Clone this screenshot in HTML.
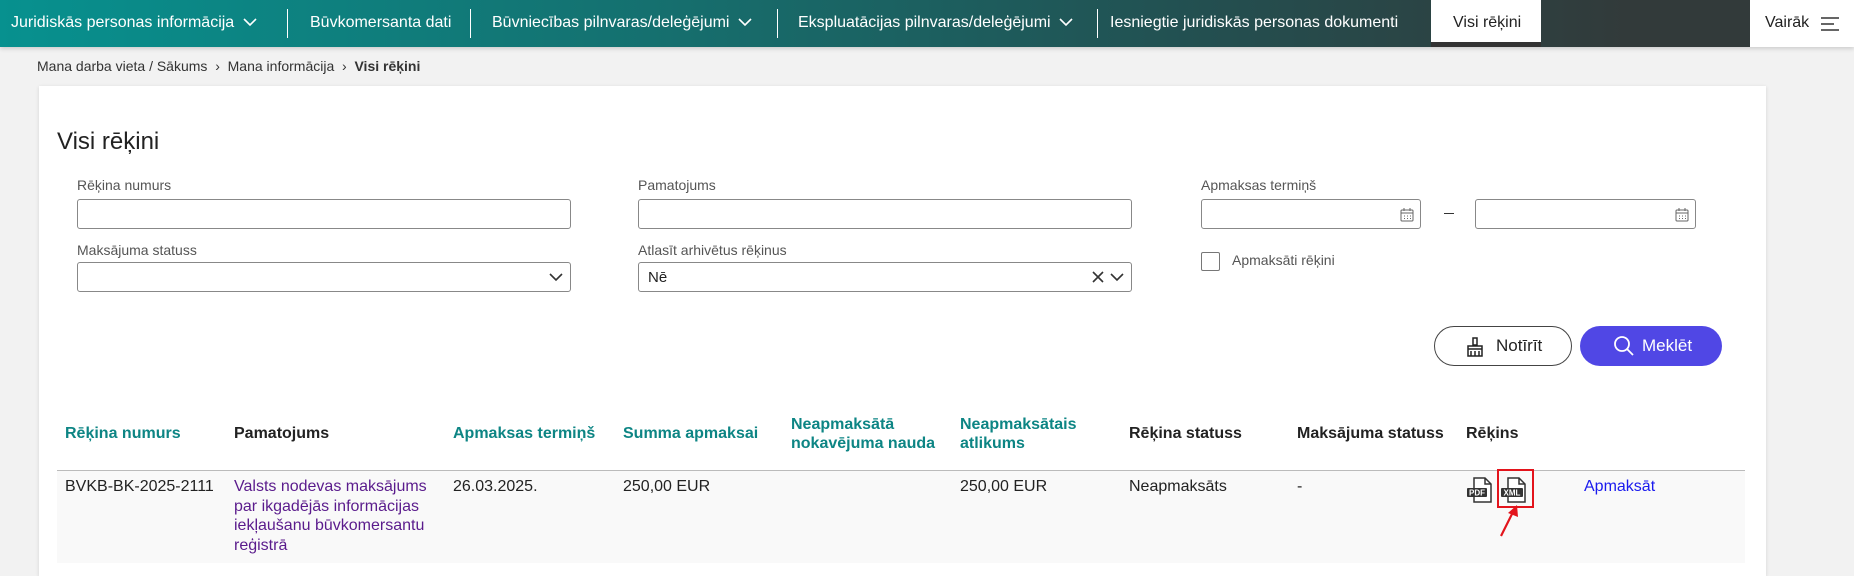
<!DOCTYPE html>
<html><head><meta charset="utf-8"><style>
*{box-sizing:border-box;margin:0;padding:0}
body{width:1854px;height:563px;overflow:hidden;background:#f2f2f2;font-family:"Liberation Sans",Arial,sans-serif;color:#222;position:relative}
.a{position:absolute;white-space:nowrap}
.nav{position:absolute;left:0;top:0;width:1854px;height:47px;background:linear-gradient(90deg,#07918f 0%,#15706f 35%,#234f50 65%,#323a3a 88%);box-shadow:0 2px 4px rgba(0,0,0,.15)}
.nav .t{color:#fff;font-size:16px;top:14px}
.sep{position:absolute;top:9px;width:1px;height:29px;background:#fff}
.card{position:absolute;left:39px;top:86px;width:1727px;height:490px;background:#fff;box-shadow:0 1px 4px rgba(0,0,0,.12)}
.lbl{font-size:14px;color:#555}
.inp{position:absolute;height:30px;border:1px solid #888;border-radius:3px;background:#fff}
.th{font-size:16px;font-weight:bold;line-height:19px;top:424px}
.tl{color:#0d8584}
.td{font-size:16px;line-height:19.5px;top:477px}
</style></head><body>
<div class="nav">
<span class="a t" style="left:11px">Juridiskās personas informācija <svg width="14" height="10" viewBox="0 0 14 10" style="margin-left:4px"><path d="M1 2l6 6 6-6" stroke="#fff" stroke-width="1.6" fill="none"/></svg></span>
<div class="sep" style="left:287px"></div>
<span class="a t" style="left:310px">Būvkomersanta dati</span>
<div class="sep" style="left:470px"></div>
<span class="a t" style="left:492px">Būvniecības pilnvaras/deleģējumi <svg width="14" height="10" viewBox="0 0 14 10" style="margin-left:4px"><path d="M1 2l6 6 6-6" stroke="#fff" stroke-width="1.6" fill="none"/></svg></span>
<div class="sep" style="left:777px"></div>
<span class="a t" style="left:798px">Ekspluatācijas pilnvaras/deleģējumi <svg width="14" height="10" viewBox="0 0 14 10" style="margin-left:4px"><path d="M1 2l6 6 6-6" stroke="#fff" stroke-width="1.6" fill="none"/></svg></span>
<div class="sep" style="left:1097px"></div>
<span class="a t" style="left:1110px">Iesniegtie juridiskās personas dokumenti</span>
<div class="a" style="left:1431px;top:0;width:110px;height:47px;background:#fff;border-bottom:5px solid #333"></div>
<span class="a t" style="left:1453px;color:#222">Visi rēķini</span>
<div class="a" style="left:1750px;top:0;width:104px;height:47px;background:#fff"></div>
<span class="a t" style="left:1765px;color:#222">Vairāk</span>
<svg class="a" style="left:1821px;top:16px" width="18" height="16" viewBox="0 0 18 16"><path d="M0 2h18M0 8h13M0 14h18" stroke="#333" stroke-width="1.5"/></svg>
</div>
<div class="a" style="left:37px;top:58px;font-size:14px;color:#333">Mana darba vieta / Sākums &nbsp;›&nbsp; Mana informācija &nbsp;›&nbsp; <b>Visi rēķini</b></div>
<div class="card"></div>
<div class="a" style="left:57px;top:128px;font-size:24px;color:#222">Visi rēķini</div>
<span class="a lbl" style="left:77px;top:177px">Rēķina numurs</span>
<div class="inp" style="left:77px;top:199px;width:494px"></div>
<span class="a lbl" style="left:638px;top:177px">Pamatojums</span>
<div class="inp" style="left:638px;top:199px;width:494px"></div>
<span class="a lbl" style="left:1201px;top:177px">Apmaksas termiņš</span>
<div class="inp" style="left:1201px;top:199px;width:220px"></div>
<svg class="a" style="left:1400px;top:207px" width="14" height="15" viewBox="0 0 14 15"><rect x="1" y="3" width="12" height="11" rx="1" fill="none" stroke="#666"/><path d="M1 6h12M4 1v3M10 1v3" stroke="#666"/><path d="M4 9h1M7 9h1M10 9h1M4 11.5h1M7 11.5h1M10 11.5h1" stroke="#666"/></svg>
<div class="a" style="left:1444px;top:213px;width:10px;height:1px;background:#333"></div>
<div class="inp" style="left:1475px;top:199px;width:221px"></div>
<svg class="a" style="left:1675px;top:207px" width="14" height="15" viewBox="0 0 14 15"><rect x="1" y="3" width="12" height="11" rx="1" fill="none" stroke="#666"/><path d="M1 6h12M4 1v3M10 1v3" stroke="#666"/><path d="M4 9h1M7 9h1M10 9h1M4 11.5h1M7 11.5h1M10 11.5h1" stroke="#666"/></svg>
<span class="a lbl" style="left:77px;top:242px">Maksājuma statuss</span>
<div class="inp" style="left:77px;top:262px;width:494px"></div>
<svg class="a" style="left:549px;top:272px" width="14" height="10" viewBox="0 0 14 10"><path d="M1 2l6 6 6-6" stroke="#333" stroke-width="1.6" fill="none"/></svg>
<span class="a lbl" style="left:638px;top:242px">Atlasīt arhivētus rēķinus</span>
<div class="inp" style="left:638px;top:262px;width:494px"></div>
<span class="a" style="left:648px;top:269px;font-size:15px">Nē</span>
<svg class="a" style="left:1092px;top:271px" width="12" height="12" viewBox="0 0 12 12"><path d="M1 1l10 10M11 1L1 11" stroke="#333" stroke-width="1.6"/></svg>
<svg class="a" style="left:1110px;top:272px" width="14" height="10" viewBox="0 0 14 10"><path d="M1 2l6 6 6-6" stroke="#333" stroke-width="1.6" fill="none"/></svg>
<div class="a" style="left:1201px;top:252px;width:19px;height:19px;border:1px solid #777;border-radius:2px"></div>
<span class="a lbl" style="left:1232px;top:252px">Apmaksāti rēķini</span>
<div class="a" style="left:1434px;top:326px;width:138px;height:40px;border:1px solid #444;border-radius:20px"></div>
<svg class="a" style="left:1465px;top:337px" width="20" height="20" viewBox="0 0 20 20"><path d="M8 1h4v7h-4zM3 9h14v3H3zM3 12v7h14v-7M6 14v5M10 14v5M14 14v5" stroke="#222" stroke-width="1.5" fill="none"/></svg>
<span class="a" style="left:1496px;top:336px;font-size:17px;color:#222">Notīrīt</span>
<div class="a" style="left:1580px;top:326px;width:142px;height:40px;background:#5047e5;border-radius:20px"></div>
<svg class="a" style="left:1613px;top:335px" width="22" height="22" viewBox="0 0 22 22"><circle cx="9" cy="9" r="7" stroke="#fff" stroke-width="1.8" fill="none"/><path d="M14 14l6 6" stroke="#fff" stroke-width="1.8"/></svg>
<span class="a" style="left:1642px;top:336px;font-size:17px;color:#fff">Meklēt</span>
<span class="a th tl" style="left:65px">Rēķina numurs</span>
<span class="a th" style="left:234px">Pamatojums</span>
<span class="a th tl" style="left:453px">Apmaksas termiņš</span>
<span class="a th tl" style="left:623px">Summa apmaksai</span>
<span class="a th tl" style="left:791px;top:415px">Neapmaksātā<br>nokavējuma nauda</span>
<span class="a th tl" style="left:960px;top:415px">Neapmaksātais<br>atlikums</span>
<span class="a th" style="left:1129px">Rēķina statuss</span>
<span class="a th" style="left:1297px">Maksājuma statuss</span>
<span class="a th" style="left:1466px">Rēķins</span>
<div class="a" style="left:57px;top:470px;width:1688px;height:93px;background:#f9f9f9;border-top:1px solid #bbb"></div>
<span class="a td" style="left:65px">BVKB-BK-2025-2111</span>
<span class="a td" style="left:234px;color:#5a1b8c">Valsts nodevas maksājums<br>par ikgadējās informācijas<br>iekļaušanu būvkomersantu<br>reģistrā</span>
<span class="a td" style="left:453px">26.03.2025.</span>
<span class="a td" style="left:623px">250,00 EUR</span>
<span class="a td" style="left:960px">250,00 EUR</span>
<span class="a td" style="left:1129px">Neapmaksāts</span>
<span class="a td" style="left:1297px">-</span>
<span class="a td" style="left:1584px;color:#1a1aee">Apmaksāt</span>
<svg class="a" style="left:1466px;top:477px" width="28" height="26" viewBox="0 0 28 26"><path d="M8 1h11l6 6v18H8z" fill="#fff" stroke="#333" stroke-width="1.5"/><path d="M19 1v6h6" fill="none" stroke="#333" stroke-width="1.5"/><rect x="1" y="11" width="20" height="9" rx="1" fill="#333"/><text x="11" y="18.5" font-size="8" font-weight="bold" fill="#fff" text-anchor="middle" font-family="Liberation Sans">PDF</text></svg>
<svg class="a" style="left:1500px;top:477px" width="28" height="26" viewBox="0 0 28 26"><path d="M8 1h11l6 6v18H8z" fill="#fff" stroke="#333" stroke-width="1.5"/><path d="M19 1v6h6" fill="none" stroke="#333" stroke-width="1.5"/><rect x="1" y="11" width="22" height="9" rx="1" fill="#333"/><text x="12" y="18.5" font-size="8" font-weight="bold" fill="#fff" text-anchor="middle" font-family="Liberation Sans">XML</text></svg>
<div class="a" style="left:1497px;top:469px;width:37px;height:39px;border:2px solid #e3141c"></div>
<svg class="a" style="left:1498px;top:504px" width="24" height="34" viewBox="0 0 24 34"><path d="M3 32L15 8" stroke="#e3141c" stroke-width="2.2"/><path d="M19 1L10 9l10 4z" fill="#e3141c"/></svg>
</body></html>
